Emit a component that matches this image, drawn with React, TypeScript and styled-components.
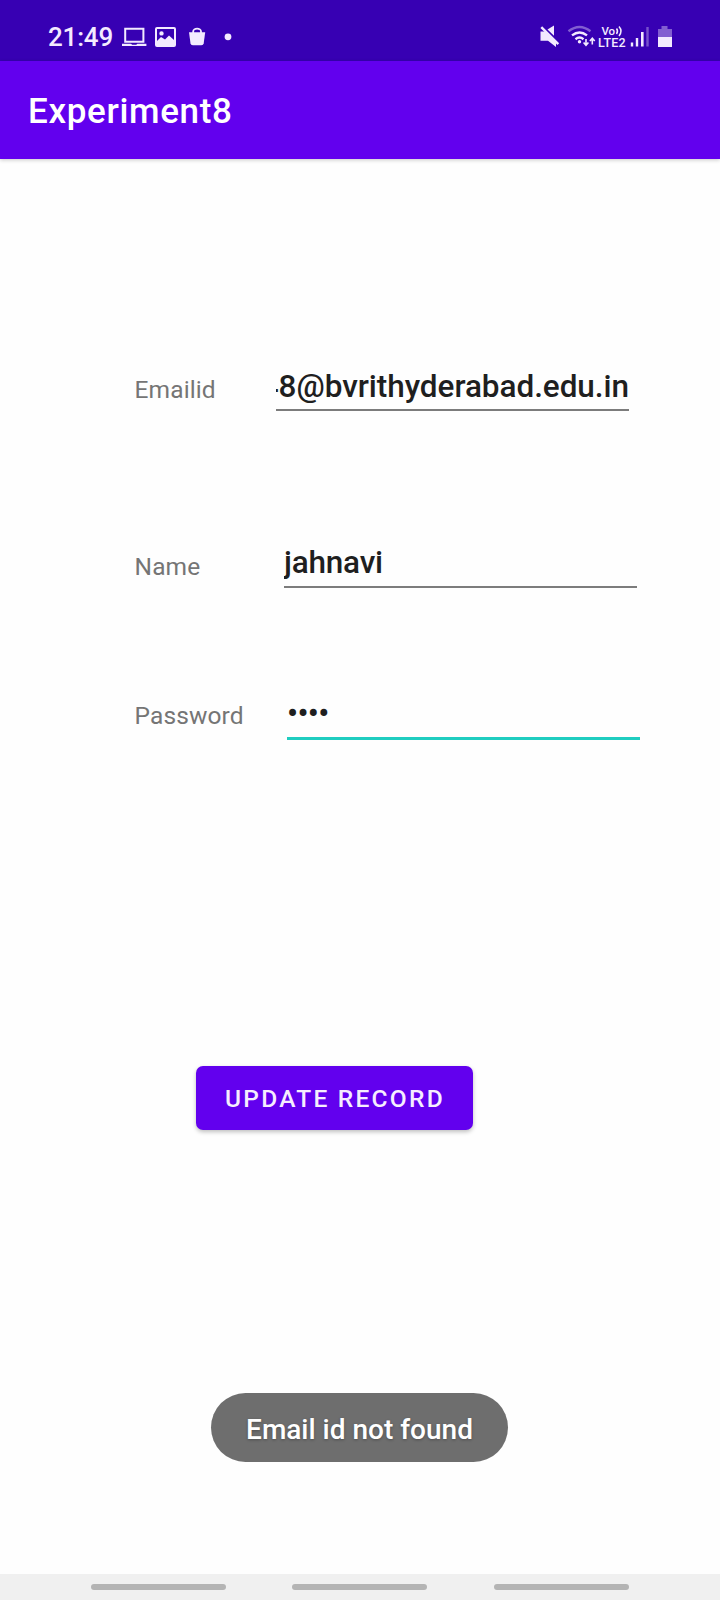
import React from "react";
import styled, { createGlobalStyle } from "styled-components";

const GlobalStyle = createGlobalStyle`
  * { box-sizing: border-box; }
  body { margin: 0; background: #fefefe; font-family: Roboto, "Liberation Sans", sans-serif; }
`;

const Screen = styled.div`
  width: 720px;
  height: 1600px;
  display: flex;
  flex-direction: column;
  background: #fefefe;
  overflow: hidden;
`;

const StatusBar = styled.header`
  height: 61px;
  flex: none;
  display: flex;
  justify-content: space-between;
  background: #3700b3;
  padding: 20px 47px 0 48px;
  color: #f3eaff;
`;

const StatusGroup = styled.div`
  display: flex;
  align-items: flex-start;
`;

const Clock = styled.span`
  width: 73px;
  font-size: 26px;
  font-weight: 500;
  line-height: 35px;
  letter-spacing: -0.2px;
`;

const AppBar = styled.div`
  height: 98px;
  flex: none;
  display: flex;
  align-items: center;
  background: #6200ee;
  padding: 4px 28px 0;
  box-shadow: 0 1px 4px rgba(0, 0, 0, 0.22);
`;

const Title = styled.h1`
  margin: 0;
  font-size: 35px;
  font-weight: 500;
  line-height: 48px;
  letter-spacing: 0.65px;
  color: #fff;
`;

const Form = styled.main`
  flex: 1;
  display: flex;
  flex-direction: column;
  align-items: flex-start;
  padding: 199px 0 0 134px;
`;

const Row = styled.label<{ $gap: number }>`
  display: flex;
  align-items: flex-start;
  height: 54px;
  margin-bottom: ${(p) => p.$gap}px;
`;

const Label = styled.span<{ $width: number }>`
  width: ${(p) => p.$width}px;
  padding: 16px 0 0 0.6px;
  font-size: 24.5px;
  line-height: 32px;
  letter-spacing: 0.1px;
  color: #757575;
`;

const Value = styled.span<{ $focused?: boolean; $end?: boolean }>`
  width: 353px;
  height: ${(p) => (p.$focused ? 56 : 53)}px;
  display: flex;
  justify-content: ${(p) => (p.$end ? "flex-end" : "flex-start")};
  overflow: hidden;
  white-space: nowrap;
  border-bottom: ${(p) => (p.$focused ? "3px solid #1fcdc0" : "2px solid #7c7c7c")};
  padding-top: ${(p) => (p.$focused ? 10 : p.$end ? 9 : 8)}px;
  font-size: 31.5px;
  font-weight: 500;
  line-height: 40px;
  letter-spacing: ${(p) => (p.$focused ? -0.6 : p.$end ? -0.05 : -0.2)}px;
  color: #1f1f1f;
`;

const UpdateButton = styled.button`
  width: 277px;
  height: 64px;
  margin: 325px 0 0 62px;
  padding: 0 0 0 1px;
  border: 0;
  border-radius: 7px;
  background: #6200ee;
  box-shadow: 0 2px 4px rgba(0, 0, 0, 0.25);
  color: #f6edff;
  font-family: inherit;
  font-size: 24.5px;
  font-weight: 500;
  letter-spacing: 2.25px;
  white-space: nowrap;
`;

const Toast = styled.div`
  width: 297px;
  height: 69px;
  margin: 263px 0 0 77px;
  display: flex;
  align-items: center;
  justify-content: center;
  padding-top: 3px;
  border-radius: 35px;
  background: #6e6e6e;
  color: #fff;
  font-size: 28px;
  font-weight: 500;
  white-space: nowrap;
  text-shadow: 0 1px 3px rgba(0, 0, 0, 0.3);
`;

const NavBar = styled.footer`
  height: 26px;
  flex: none;
  display: flex;
  gap: 66.5px;
  background: #f0f0f0;
  padding: 10px 0 0 90.5px;
`;

const NavHandle = styled.span`
  width: 135px;
  height: 6px;
  border-radius: 3px;
  background: #b4b4b4;
`;

const NotificationIcons = () => (
  <svg width="114" height="36" viewBox="121 20 114 36" fill="currentColor">
    <path d="M125.2 28.7h18.200v13h-18.200z" fill="none" stroke="currentColor" strokeWidth="2" />
    <path d="M122 43.800h9l1.200 1h4l1.200-1h9v2.300H122z" />
    <path fillRule="evenodd" d="M157 27h17q2 0 2 2v16q0 2-2 2h-17q-2 0-2-2V29q0-2 2-2zm0 2v12l4-4 4 2.500 4-4 5 4.500V29zm4.500 2.200a2.200 2.200 0 1 1 0 4.400 2.200 2.200 0 0 1 0-4.400z" />
    <path d="M189 32.200h16.200l-1.500 11q-.3 2-2.300 2h-8.600q-2 0-2.300-2z" />
    <path d="M193.200 33v-1.500a3.900 2.800 0 0 1 7.800 0V33" fill="none" stroke="currentColor" strokeWidth="1.800" />
    <circle cx="228" cy="36.800" r="3.400" />
  </svg>
);

const SystemIcons = () => (
  <svg width="135" height="36" viewBox="538 20 135 36" fill="currentColor">
    <path d="M540.500 31.500h4.500l11 10.500v5L548 40.700h-7.500z" />
    <path d="M547.500 29.500l6.500-4v10.200z" />
    <path d="M541.300 27.200l17 17" stroke="currentColor" strokeWidth="2.400" />
    <g fill="none" stroke="currentColor" strokeWidth="2.400">
      <path d="M568.500 31.200q11-8.500 22 0" opacity=".4" />
      <path d="M572 35.400q7.500-6 15 0" />
      <path d="M575.500 39.200q4-3.200 8 0" />
    </g>
    <circle cx="579.500" cy="41.700" r="1.700" />
    <path d="M586 39v6M583.600 42.500l2.400 2.800 2.400-2.800M592.300 44.500v-6M589.900 41l2.400-2.700 2.400 2.700" fill="none" stroke="currentColor" strokeWidth="1.600" />
    <text x="601.500" y="34.800" fontSize="11.500" fontWeight="500" textLength="13.500">Vo</text>
    <path d="M616.500 28.500q2 2.700 0 5.500M619 26.500q4 4.600 0 9.500" fill="none" stroke="currentColor" strokeWidth="1.500" />
    <text x="598" y="46.700" fontSize="12.500" fontWeight="500" textLength="27.500">LTE2</text>
    <path d="M630.800 42.500h2.400v4h-2.400zM635.800 38h2.400v8.500h-2.400zM641 32h2.600v14.500H641z" />
    <path d="M646.300 27h2.400v19.500h-2.400z" opacity=".35" />
    <path d="M661.500 26h6v3h4.500v8h-14v-8h3.500z" opacity=".4" />
    <path d="M658 37h14v10h-14z" />
  </svg>
);

export default function App() {
  return (
    <Screen>
      <GlobalStyle />
      <StatusBar>
        <StatusGroup>
          <Clock>21:49</Clock>
          <NotificationIcons />
        </StatusGroup>
        <StatusGroup>
          <SystemIcons />
        </StatusGroup>
      </StatusBar>
      <AppBar>
        <Title>Experiment8</Title>
      </AppBar>
      <Form>
        <Row $gap={123}>
          <Label $width={142}>Emailid</Label>
          <Value $end>48@bvrithyderabad.edu.in</Value>
        </Row>
        <Row $gap={95}>
          <Label $width={150}>Name</Label>
          <Value>jahnavi</Value>
        </Row>
        <Row $gap={3}>
          <Label $width={153}>Password</Label>
          <Value $focused>••••</Value>
        </Row>
        <UpdateButton>UPDATE RECORD</UpdateButton>
        <Toast>Email id not found</Toast>
      </Form>
      <NavBar>
        <NavHandle />
        <NavHandle />
        <NavHandle />
      </NavBar>
    </Screen>
  );
}
